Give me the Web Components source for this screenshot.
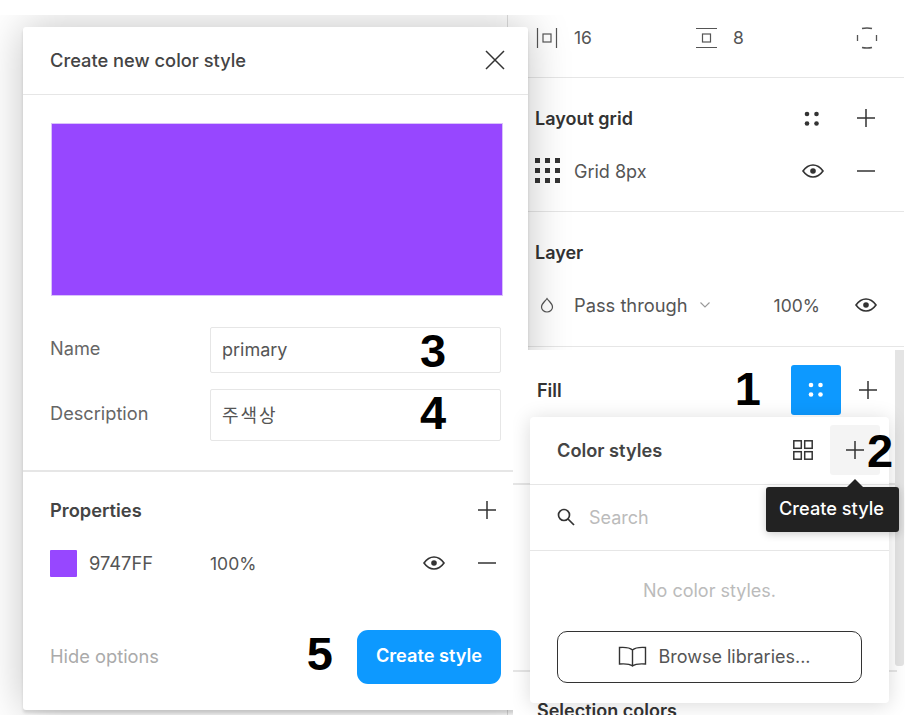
<!DOCTYPE html>
<html lang="ko"><head><meta charset="utf-8"><style>
html,body{margin:0;background:#fff}
body{width:910px;height:725px;overflow:hidden;position:relative;font:400 18px Inter,"Noto Sans CJK KR",sans-serif;color:#555}
</style></head><body>
<figma-desktop>
<figma-sidebar></figma-sidebar>
<style-dialog></style-dialog>
<fill-panel></fill-panel>
</figma-desktop>
<script>
const I={
plus:s=>`<svg width="${s||20}" height="${s||20}" viewBox="0 0 20 20" fill="none" stroke="#333" stroke-width="1.5"><path d="M10 1v18M1 10h18"/></svg>`,
minus:`<svg width="20" height="20" viewBox="0 0 20 20" fill="none" stroke="#333" stroke-width="1.5"><path d="M1 10h18"/></svg>`,
eye:`<svg width="22" height="14" viewBox="0 0 22 14" fill="none" stroke="#333" stroke-width="1.6"><path d="M1 7C4 2.800 7.200 1 11 1s7 1.800 10 6c-3 4.200-6.200 6-10 6S4 11.200 1 7z"/><circle cx="11" cy="7" r="2.800" fill="#333" stroke="none"/></svg>`,
dots:(c)=>`<svg width="16" height="16" viewBox="0 0 16 16" fill="${c}"><circle cx="3" cy="3" r="2.300"/><circle cx="12.500" cy="3" r="2.300"/><circle cx="3" cy="12.500" r="2.300"/><circle cx="12.500" cy="12.500" r="2.300"/></svg>`
};
function def(name,css,html){customElements.define(name,class extends HTMLElement{constructor(){super();this.attachShadow({mode:'open'}).innerHTML=`<style>${css}</style>${html}`}})}

def('figma-desktop',`:host{position:absolute;left:0;top:15px;width:905px;height:700px;overflow:hidden;display:block}`,`<slot></slot>`);
def('call-out',`:host{display:inline-block;font:700 47px/46px "Liberation Sans",Arial,sans-serif;color:#000}`,`<slot></slot>`);

def('figma-sidebar',`
:host{position:absolute;left:507px;top:0;width:397px;height:700px;border-left:1px solid #ddd;box-sizing:border-box;background:#fff;display:block}
section{border-bottom:1.500px solid #e6e6e6;padding-left:27px;padding-right:28px;box-sizing:border-box;white-space:nowrap}
.a{height:63px;display:flex;align-items:center;padding:0 26px 17px 28px}
.a span{margin-left:16px;color:#555;font-size:17.500px}
.a .g1{width:160px;display:flex;align-items:center}
.a .g2{flex:1;display:flex;align-items:center}
.a .g2 span{margin-left:16px}
.b{height:134px;padding-top:28px}
.c{height:135px;padding-top:28px;padding-right:20px}
.h{display:flex;align-items:center;height:24px;font-weight:600;font-size:18px;color:#333}
.h b{flex:1;font-weight:600}
.h .d{margin-right:36px;width:16px;height:16px;display:block}
.r{display:flex;align-items:center;height:24px;margin-top:29px}
.r .lb{margin-left:13px;flex:1;color:#555}
.r .ic{width:26px;height:26px;display:block}
.r .m{margin-left:32px;display:block;height:20px}
.c .drop{width:14px;height:16px;margin:0 15px 0 5px;display:block;flex:none}
.c .pt{margin-left:5px;color:#555;flex:none;font-size:18.300px}
.c .ch{margin-left:12px;margin-right:64px;display:block;flex:none}
.c .pc{margin-right:35px;font-size:17.500px;flex:none}
`,`
<section class="a">
 <div class="g1"><svg width="22" height="22" viewBox="0 0 22 22" fill="none" stroke="#555" stroke-width="1.200"><path d="M1.500 1v20M20.500 1v20"/><rect x="7" y="7" width="8" height="8"/></svg><span>16</span></div>
 <div class="g2"><svg width="21" height="22" viewBox="0 0 21 22" fill="none" stroke="#555" stroke-width="1.200"><path d="M0 1.500h21M0 20.500h21"/><rect x="6.500" y="7" width="8" height="8"/></svg><span>8</span></div>
 <svg width="22" height="22" viewBox="0 0 22 22" fill="none" stroke="#555" stroke-width="1.300"><path d="M6 1.500c0 0 2-.5 5-.5s5 .5 5 .5M6 20.500c0 0 2 .5 5 .5s5-.5 5-.5M1.500 8v6M20.500 8v6"/></svg>
</section>
<section class="b">
 <div class="h"><b>Layout grid</b><span class="d">${I.dots('#333')}</span>${I.plus()}</div>
 <div class="r"><svg class="ic" viewBox="0 0 26 26" fill="#333"><rect x="0" y="0" width="5" height="5"/><rect x="10" y="0" width="5" height="5"/><rect x="20" y="0" width="5" height="5"/><rect x="0" y="10" width="5" height="5"/><rect x="10" y="10" width="5" height="5"/><rect x="20" y="10" width="5" height="5"/><rect x="0" y="20" width="5" height="5"/><rect x="10" y="20" width="5" height="5"/><rect x="20" y="20" width="5" height="5"/></svg><span class="lb">Grid 8px</span>${I.eye}<span class="m">${I.minus}</span></div>
</section>
<section class="c">
 <div class="h"><b>Layer</b></div>
 <div class="r"><svg class="drop" viewBox="0 0 14 16" fill="none" stroke="#555" stroke-width="1.200"><path d="M7 1.500C9 4.500 12.500 6.500 12.500 10a5.500 5 0 0 1-11 0C1.500 6.500 5 4.500 7 1.500z"/></svg><span class="pt">Pass through</span><svg class="ch" width="10" height="6" viewBox="0 0 10 6" fill="none" stroke="#999" stroke-width="1.100"><path d="M.5 .5 5 5 9.500 .5"/></svg><span class="pc">100%</span>${I.eye}</div>
</section>`);

def('style-dialog',`
:host{position:absolute;left:23px;top:12px;width:505px;height:683px;background:#fff;border-radius:3px;box-shadow:0 0 44px rgba(0,0,0,.24),0 3px 3px rgba(0,0,0,.12);display:flex;flex-direction:column;box-sizing:border-box}
header{height:68px;flex:none;display:flex;align-items:center;justify-content:space-between;padding:0 23px 1px 27px;border-bottom:1.500px solid #e6e6e6;box-sizing:border-box;font-weight:500;font-size:18.300px;color:#444}
.sw{height:173px;margin:28px 25px 0 28px;background:#9747ff;flex:none;border:1px solid #d9c2fa;box-sizing:border-box}
.f{display:flex;align-items:center;padding-left:27px;padding-right:27px;height:46px;margin-top:31px}
.f+.f{margin-top:16px;height:52px}
.f label{width:160px;color:#666;font-size:18.200px;padding-bottom:4px}
.in{width:291px;height:100%;border:1.500px solid #e6e6e6;border-radius:2px;box-sizing:border-box;display:flex;align-items:center;padding:0 0 2px 11px;position:relative;color:#555}
.ko{font-size:18px;letter-spacing:2px}
.in call-out{position:absolute;left:209px;top:0}
.sep{height:1.500px;background:#e6e6e6;margin-top:29px;flex:none}
.pr{display:flex;align-items:center;justify-content:space-between;padding:0 31px 0 27px;margin-top:26px;height:24px;font-weight:600;font-size:18.300px;color:#444}
.row{display:flex;align-items:center;padding:0 31px 0 27px;margin-top:28px;height:27px}
.row i{width:27px;height:27px;background:#9747ff;border-radius:1px;flex:none}
.row .hex{margin-left:12px;width:121px;color:#555;font-size:18.300px}
.row .pct{flex:1;color:#555;font-size:17.500px}
.row .m{margin-left:32px;height:20px;display:block}
.ft{display:flex;align-items:center;padding:0 27px;margin-top:53px;height:54px}
.ft .hide{color:#aaa;flex:1;font-size:18.300px;padding-bottom:2px}
.ft call-out{margin-right:24px;margin-top:-6px}
.btn{width:144px;height:54px;border-radius:11px;background:#0d99ff;color:#fff;font-weight:600;font-size:18.200px;display:flex;align-items:center;justify-content:center;padding-bottom:3px;box-sizing:border-box}
`,`
<header><span>Create new color style</span><svg width="20" height="20" viewBox="0 0 20 20" fill="none" stroke="#333" stroke-width="1.500"><path d="M1 1l18 18M19 1 1 19"/></svg></header>
<div class="sw"></div>
<div class="f"><label>Name</label><div class="in">primary<call-out>3</call-out></div></div>
<div class="f"><label>Description</label><div class="in"><span class="ko">주색상</span><call-out>4</call-out></div></div>
<div class="sep"></div>
<div class="pr"><span>Properties</span>${I.plus()}</div>
<div class="row"><i></i><span class="hex">9747FF</span><span class="pct">100%</span>${I.eye}<span class="m">${I.minus}</span></div>
<div class="ft"><span class="hide">Hide options</span><call-out>5</call-out><div class="btn">Create style</div></div>`);

def('fill-panel',`
:host{position:absolute;left:513px;top:335px;width:392px;height:365px;background:#fff;overflow:hidden;display:block}
.rule{height:1.500px;background:#e6e6e6}
.fill{display:flex;align-items:center;height:50px;margin:15px 0 0 24px;font-weight:600;font-size:18px;color:#333}
.fill b{flex:1;font-weight:600}
.fill call-out{margin-right:30px;margin-top:-2px}
.blue{width:50px;height:50px;background:#0d99ff;border-radius:3px;display:flex;align-items:center;justify-content:center}
.fill .p{margin:0 27px 0 17px;display:block;height:20px}
.bar{position:absolute;left:382px;top:0;width:9px;height:316px;background:#e4e4e4;border-radius:0 0 3px 3px}
.l1{position:absolute;left:0;right:8px;top:133px}
.l2{position:absolute;left:0;right:8px;top:320px}
.sel{position:absolute;left:24px;top:351px;font-weight:600;font-size:18px;color:#333;line-height:20px;white-space:nowrap}
.pop{position:absolute;left:17px;top:67px;width:359px;height:286px;background:#fff;border-radius:4px;box-shadow:0 2px 20px rgba(0,0,0,.15);display:flex;flex-direction:column}
.t{height:66.500px;display:flex;align-items:center;padding:0 9px 0 27px;font-weight:600;font-size:18.200px;color:#444;flex:none;box-sizing:border-box}
.t b{flex:1;font-weight:600}
.t .g{display:block;height:20px;margin-right:17px}
.hov{width:50px;height:50px;background:#f4f4f4;border-radius:3px;display:flex;align-items:center;padding-left:15px;box-sizing:border-box;position:relative}
.hov call-out{position:absolute;left:37px;top:3px}
.s{height:65px;display:flex;align-items:center;padding-left:27px;color:#bbb;border-top:1.500px solid #e6e6e6;border-bottom:1.500px solid #e6e6e6;flex:none;box-sizing:content-box}
.s svg{margin-right:14px}
.n{text-align:center;color:#bbb;margin-top:28px;line-height:24px}
.br{margin:28px 0 0 27px;width:305px;height:52px;border:1.500px solid #333;border-radius:10px;box-sizing:border-box;display:flex;align-items:center;justify-content:center;gap:11px;color:#555;padding-left:10px}
.tip{position:absolute;left:253px;top:137px;width:133px;height:45px;background:#222;color:#fff;border-radius:3px;display:flex;align-items:center;justify-content:center;font-weight:500;font-size:18.200px;padding:0 2px 4px 0;box-sizing:border-box;box-shadow:0 2px 8px rgba(0,0,0,.2);white-space:nowrap}
.tip:before{content:"";position:absolute;left:81px;top:-8px;border:8px solid transparent;border-top:0;border-bottom-color:#222}
`,`
<div class="fill"><b>Fill</b><call-out>1</call-out><div class="blue">${I.dots('#fff')}</div><span class="p">${I.plus()}</span></div>
<div class="bar"></div>
<div class="rule l1"></div><div class="rule l2"></div>
<div class="sel">Selection colors</div>
<div class="pop">
 <div class="t"><b>Color styles</b><svg class="g" width="20" height="20" viewBox="0 0 20 20" fill="none" stroke="#333" stroke-width="1.500"><rect x=".8" y=".8" width="7.500" height="7.500"/><rect x="11.700" y=".8" width="7.500" height="7.500"/><rect x=".8" y="11.700" width="7.500" height="7.500"/><rect x="11.700" y="11.700" width="7.500" height="7.500"/></svg><div class="hov">${I.plus()}<call-out>2</call-out></div></div>
 <div class="s"><svg width="18" height="18" viewBox="0 0 18 18" fill="none" stroke="#333" stroke-width="1.700"><circle cx="7" cy="7" r="5.500"/><path d="M11 11l6 6"/></svg>Search</div>
 <div class="n">No color styles.</div>
 <div class="br"><svg width="29" height="21" viewBox="0 0 29 21" fill="none" stroke="#333" stroke-width="1.400"><path d="M14.500 4C12 1.800 8 1 1.500 1.500V18C8 17.500 12 18 14.500 20c2.500-2 6.500-2.500 13-2V1.500C21 1 17 1.800 14.500 4zM14.500 4v16"/></svg><span>Browse libraries...</span></div>
</div>
<div class="tip">Create style</div>`);
</script>
</body></html>
